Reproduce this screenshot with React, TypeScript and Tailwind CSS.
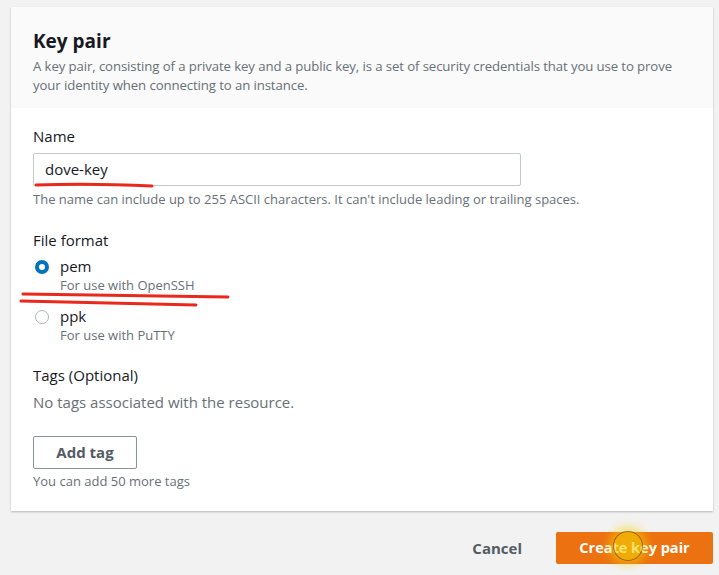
export default function App() {
  const font = { fontFamily: "'Open Sans', 'Liberation Sans', sans-serif" };
  return (
    <div className="relative w-[719px] h-[575px] overflow-hidden bg-[#f2f2f2] pt-[7px]" style={font}>
      <div className="ml-[11px] w-[702px] bg-white shadow-[0_1px_2px_rgba(0,0,0,0.25)]">
        <div className="bg-[#fafafa] px-[22px] pt-[22px] h-[101px]">
          <h2 className="text-[19px] leading-[24px] font-bold text-[#16191f]">Key pair</h2>
          <p className="mt-[4px] text-[13.2px] leading-[19px] text-[#687078] tracking-[-0.1px]">
            A key pair, consisting of a private key and a public key, is a set of security credentials that you use to prove
            your identity when connecting to an instance.
          </p>
        </div>
        <div className="px-[22px] pt-[18px] pb-[21px]">
          <div className="text-[15px] leading-[20px] text-[#16191f]">Name</div>
          <div className="mt-[7px] w-[488px] h-[33px] border border-[#c4cbcc] rounded-[2px] flex items-center px-[11px] text-[15px] text-[#16191f]">
            dove-key
          </div>
          <div className="mt-[4px] text-[13px] leading-[18px] text-[#687078]">
            The name can include up to 255 ASCII characters. It can't include leading or trailing spaces.
          </div>

          <div className="mt-[22px] text-[15px] leading-[20px] text-[#16191f]">File format</div>
          <div className="mt-[6px] flex gap-[11px] pl-[2px]">
            <div className="mt-[4px] w-[14px] h-[14px] rounded-full border-[4px] border-[#0073bb] bg-white" />
            <div>
              <div className="text-[15px] leading-[20px] text-[#16191f]">pem</div>
              <div className="text-[13px] leading-[19px] text-[#687078]">For use with OpenSSH</div>
            </div>
          </div>
          <div className="mt-[11px] flex gap-[11px] pl-[2px]">
            <div className="mt-[4px] w-[14px] h-[14px] rounded-full border border-[#aab7b8] bg-white" />
            <div>
              <div className="text-[15px] leading-[20px] text-[#16191f]">ppk</div>
              <div className="text-[13px] leading-[19px] text-[#687078]">For use with PuTTY</div>
            </div>
          </div>

          <div className="mt-[20px] text-[15px] leading-[20px] text-[#16191f]">Tags (Optional)</div>
          <div className="mt-[7px] text-[15px] leading-[20px] text-[#687078]">No tags associated with the resource.</div>
          <button className="mt-[24px] w-[104px] h-[33px] border border-[#879596] rounded-[2px] bg-white text-[15px] font-bold text-[#545b64]">
            Add tag
          </button>
          <div className="mt-[3px] text-[13px] leading-[18px] text-[#687078]">You can add 50 more tags</div>
        </div>
      </div>

      <div className="mt-[21px] flex justify-end items-center pr-[6px] gap-[34px]">
        <button className="text-[15px] font-bold text-[#545b64]">Cancel</button>
        <button className="w-[157px] h-[32px] rounded-[2px] bg-[#ec7211] text-white text-[14.5px] font-bold">
          Create key pair
        </button>
      </div>

      {/* red pen annotations */}
      <svg className="absolute left-0 top-0 pointer-events-none" width="719" height="575">
        <path d="M36 185 Q90 183 152 186" stroke="#e8291c" strokeWidth="3" fill="none" strokeLinecap="round" />
        <path d="M23 294 L228 297" stroke="#e8291c" strokeWidth="3" fill="none" strokeLinecap="round" />
        <path d="M21 301 L196 305" stroke="#e8291c" strokeWidth="3" fill="none" strokeLinecap="round" />
      </svg>

      {/* cursor highlight */}
      <div className="absolute left-[613px] top-[531px] w-[30px] h-[30px] rounded-full bg-[#f5d200]/60 shadow-[0_0_10px_4px_rgba(250,210,0,0.55)] border-[1.5px] border-[#6b4a1a]/70" />
    </div>
  );
}
